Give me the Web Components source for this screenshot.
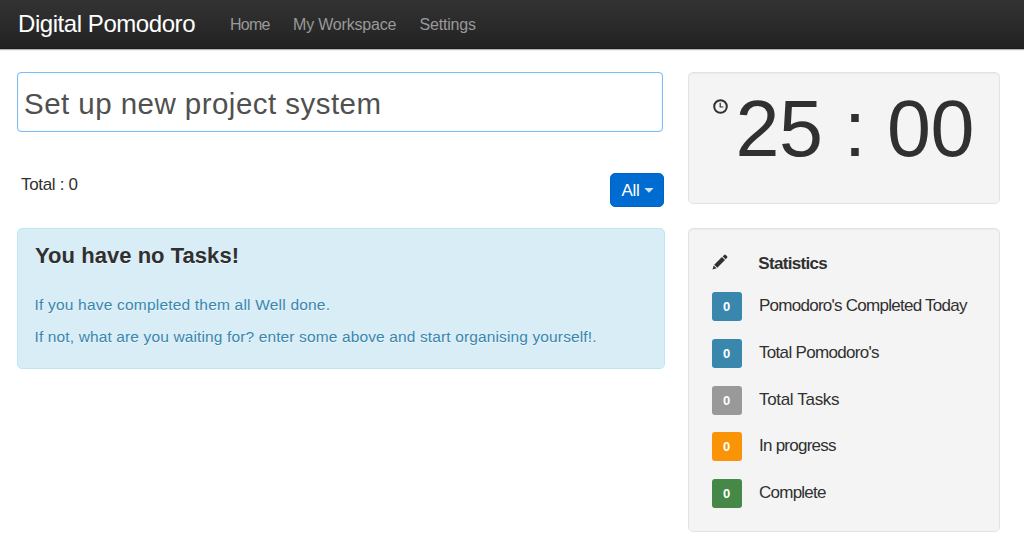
<!DOCTYPE html>
<html lang="en">
<head>
<meta charset="utf-8">
<title>Digital Pomodoro</title>
<style>
  html, body { margin: 0; height: 100%; overflow: hidden; background: #fff; }
  body { font-family: "Liberation Sans", Arial, sans-serif; color: #303030; }
</style>
</head>
<body>
<pomodoro-app></pomodoro-app>
<script>
const define = (name, html, ready) => {
  const template = document.createElement('template');
  template.innerHTML = html;
  customElements.define(name, class extends HTMLElement {
    constructor() {
      super();
      this.attachShadow({ mode: 'open' }).append(template.content.cloneNode(true));
    }
    connectedCallback() { if (ready) ready(this, this.shadowRoot); }
  });
};

/* A line of text tracked so that it spans a given measure. */
define('tracked-text', `
  <style>:host { display: block; flex: none; white-space: nowrap; } span { display: inline-block; }</style>
  <span><slot></slot></span>`, (host, root) => {
  const span = root.querySelector('span');
  const count = host.textContent.length;
  const natural = span.getBoundingClientRect().width;
  const wanted = Number(host.getAttribute('measure'));
  if (wanted && count > 1) span.style.letterSpacing = ((wanted - natural) / (count - 1)).toFixed(3) + 'px';
});

define('clock-icon', `
  <style>:host { display: block; width: 15px; height: 15px; } svg { display: block; }</style>
  <svg width="15" height="15" viewBox="0 0 15 15" fill="none" stroke="#303030">
    <circle cx="7.5" cy="7.5" r="6.3" stroke-width="2"/>
    <path d="M7.2 3.8v4.2h3.2" stroke-width="1.2"/>
  </svg>`);

define('pencil-icon', `
  <style>:host { display: block; width: 16px; height: 16px; } svg { display: block; }</style>
  <svg width="16" height="16" viewBox="0 0 16 16" fill="#303030">
    <path d="M0.5 15.5L1.7 11.5L4.5 14.3Z"/>
    <path d="M2.2 10.7L9.9 3L13 6.1L5.3 13.7Z"/>
    <path d="M10.7 2.4L12.2 .9Q13 .2 13.8 1L15.1 2.3Q15.8 3 15.1 3.8L13.6 5.3Z"/>
  </svg>`);

define('nav-bar', `
  <style>
    :host { display: flex; box-sizing: border-box; height: 49px; padding-left: 18px;
      background: linear-gradient(#333, #222); border-bottom: 1px solid #1c1c1c; box-shadow: 0 1px 1px rgba(0,0,0,.3); }
    .brand { width: 212px; font-size: 24px; line-height: 48px; color: #fff; }
    nav { display: flex; font-size: 16px; line-height: 50px; color: #999; }
    .home { width: 63px; } .work { width: 126.5px; }
  </style>
  <tracked-text class="brand" measure="177.5">Digital Pomodoro</tracked-text>
  <nav>
    <tracked-text class="home" measure="40.5">Home</tracked-text>
    <tracked-text class="work" measure="103.5">My Workspace</tracked-text>
    <tracked-text measure="56.5">Settings</tracked-text>
  </nav>`);

define('task-entry', `
  <style>
    :host { display: block; box-sizing: border-box; width: 646px; height: 60px; border: 1px solid #7abcf3; border-radius: 4px;
      padding-left: 6px; font-size: 29.5px; line-height: 61px; color: #505050; background: #fff;
      box-shadow: inset 0 0 1px #9bd0fa; }
  </style>
  <tracked-text measure="357">Set up new project system</tracked-text>`);

define('filter-button', `
  <style>
    :host { display: flex; align-items: center; box-sizing: border-box; width: 54px; height: 34px; border-radius: 5px;
      border: 1px solid #0064c4; padding-left: 10px; gap: 4px; margin-right: .6px; background: #006bd0; color: #fff; font-size: 17px; line-height: 33px; }
    svg { display: block; }
  </style>
  <tracked-text measure="18.5">All</tracked-text>
  <svg width="10" height="5" viewBox="0 0 10 5"><path d="M0.3 0H9.7L5 4.8Z" fill="#cfe2f6"/></svg>`);

define('info-alert', `
  <style>
    :host { display: block; box-sizing: border-box; width: 648px; height: 141px; border: 1px solid #bce8f1; border-radius: 5px;
      padding: 13px 17px; background: #d9edf7; color: #3a87ad; font-size: 15.5px; text-shadow: 0 1px 0 rgba(255,255,255,.5); }
    .title { color: #303030; font-size: 22px; font-weight: bold; line-height: 27px; margin-bottom: 20px; }
    .line { line-height: 32px; margin-left: -.5px; }
  </style>
  <tracked-text class="title" measure="204">You have no Tasks!</tracked-text>
  <tracked-text class="line" measure="295.5">If you have completed them all Well done.</tracked-text>
  <tracked-text class="line" measure="562">If not, what are you waiting for? enter some above and start organising yourself!.</tracked-text>`);

define('well-card', `
  <style>:host { display: block; box-sizing: border-box; width: 312px; border: 1px solid #e3e3e3; border-radius: 5px;
    background: #f4f4f4; box-shadow: inset 0 1px 1px rgba(0,0,0,.04); padding-left: 23px; }</style>
  <slot></slot>`);

define('pomodoro-timer', `
  <style>
    :host { display: flex; height: 130px; }
    clock-icon { margin: 25.5px 7.5px 0 1px; }
    .time { font-size: 79px; line-height: 111px; color: #303030; }
  </style>
  <clock-icon></clock-icon>
  <tracked-text class="time" measure="239">25 : 00</tracked-text>`);

define('stat-row', `
  <style>
    :host { display: flex; height: 29px; }
    .badge { box-sizing: border-box; width: 30px; height: 29px; margin-right: 17px; border-radius: 3px; background: var(--tone);
      color: #fff; font: bold 13px/30px "Liberation Sans", Arial, sans-serif; text-align: center; padding-right: 1px; }
  </style>
  <div class="badge">0</div><slot></slot>`);

define('pomodoro-stats', `
  <style>
    :host { display: block; height: 302px; color: #303030; }
    header { display: flex; height: 63px; }
    pencil-icon { margin: 24.5px 30px 0 .3px; }
    .title { font-size: 17px; font-weight: bold; line-height: 70px; }
    .rows { display: flex; flex-direction: column; gap: 17.8px; font-size: 17px; line-height: 27px; }
  </style>
  <header><pencil-icon></pencil-icon><tracked-text class="title" measure="69.5">Statistics</tracked-text></header>
  <div class="rows">
    <stat-row style="--tone:#3a87ad"><tracked-text measure="208.5">Pomodoro's Completed Today</tracked-text></stat-row>
    <stat-row style="--tone:#3a87ad"><tracked-text measure="120.5">Total Pomodoro's</tracked-text></stat-row>
    <stat-row style="--tone:#999999"><tracked-text measure="80.5">Total Tasks</tracked-text></stat-row>
    <stat-row style="--tone:#f89406"><tracked-text measure="77.5">In progress</tracked-text></stat-row>
    <stat-row style="--tone:#468847"><tracked-text measure="67.5">Complete</tracked-text></stat-row>
  </div>`);

define('pomodoro-app', `
  <style>
    :host { display: block; }
    main { display: grid; grid-template-columns: 648px 312px; grid-template-rows: 132px 304px; gap: 24px 23px; padding: 23px 0 0 17px; }
    .bar { display: flex; justify-content: space-between; align-items: flex-start; margin-top: 41px; }
    .total { font-size: 17px; line-height: 23px; margin-left: 4px; }
  </style>
  <nav-bar></nav-bar>
  <main>
    <section>
      <task-entry></task-entry>
      <div class="bar"><tracked-text class="total" measure="57">Total : 0</tracked-text><filter-button></filter-button></div>
    </section>
    <well-card><pomodoro-timer></pomodoro-timer></well-card>
    <info-alert></info-alert>
    <well-card><pomodoro-stats></pomodoro-stats></well-card>
  </main>`);
</script>
</body>
</html>
